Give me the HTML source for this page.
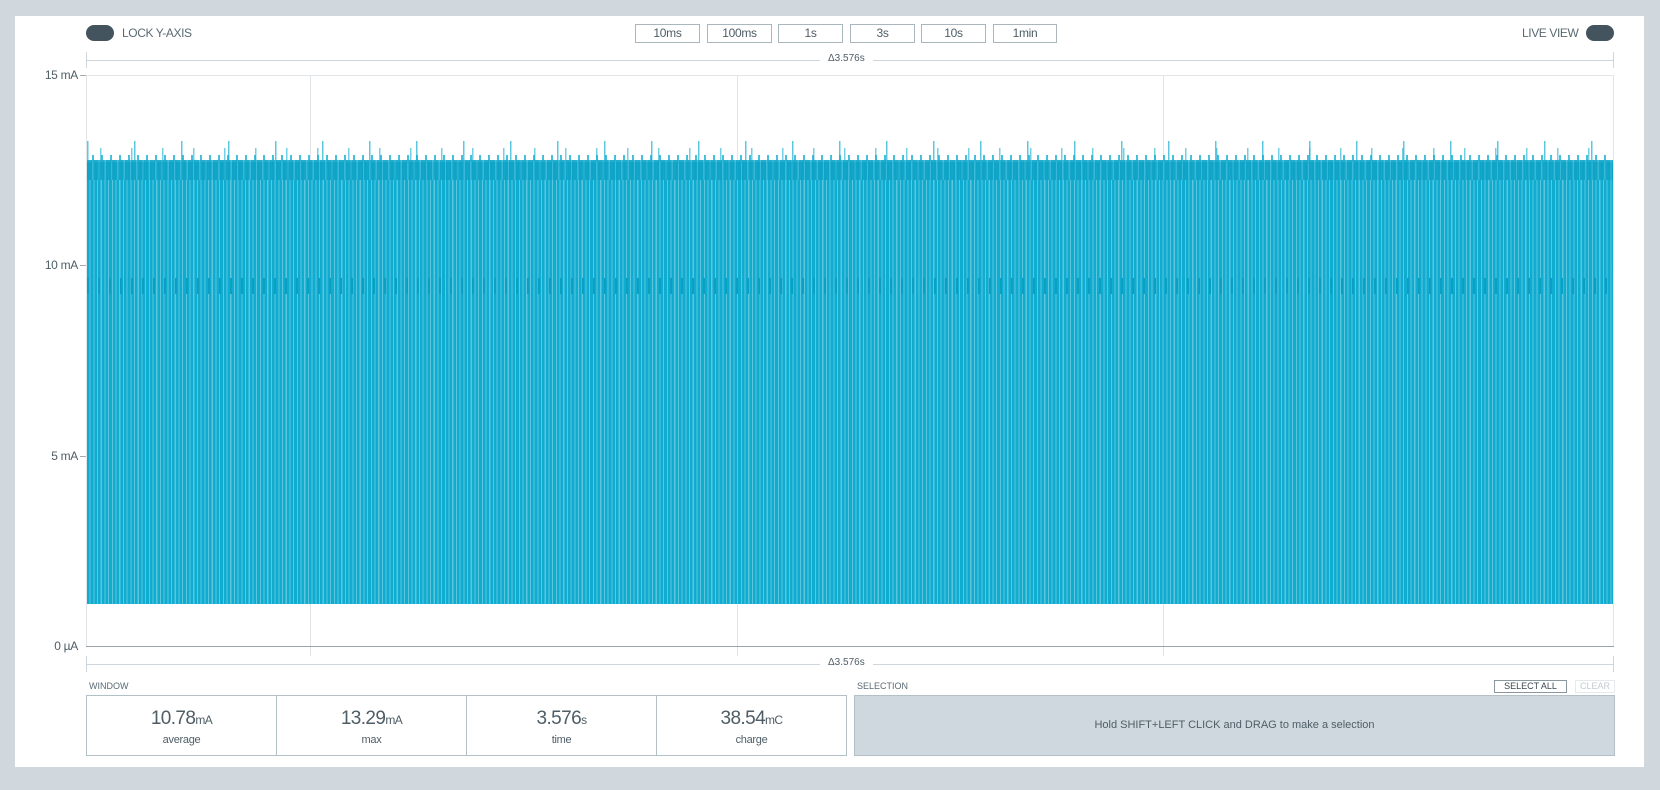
<!DOCTYPE html>
<html><head><meta charset="utf-8"><style>
*{margin:0;padding:0;box-sizing:border-box}
body{width:1660px;height:790px;background:#d0d8de;font-family:"Liberation Sans",sans-serif;color:#4e5d66;position:relative;overflow:hidden}
.card{position:absolute;left:15px;top:16px;width:1629px;height:751px;background:#fff}
.a{position:absolute}
.tog{position:absolute;width:28px;height:16px;border-radius:8px;background:#44545e}
.lbl{font-size:12px;color:#5a6a73;letter-spacing:-0.4px}
.btn{position:absolute;top:24px;height:19px;border:1px solid #a9b6bd;font-size:12px;text-align:center;line-height:17px;color:#4e5d66;letter-spacing:-0.3px}
.yl{position:absolute;font-size:12px;color:#4e5d66;text-align:right;width:60px;letter-spacing:-0.3px}
.box{position:absolute;top:695px;height:61px;border:1px solid #b3c0c7}
.val{position:absolute;top:12px;left:0;right:0;text-align:center;font-size:19px;color:#4e5d66;letter-spacing:-0.6px}
.val small{font-size:12px}
.cap{position:absolute;top:38px;left:0;right:0;text-align:center;font-size:11px;color:#4e5d66;letter-spacing:-0.3px}
</style></head><body>
<div class="card"></div>
<div class="tog" style="left:86px;top:25px"></div>
<div class="a lbl" style="left:122px;top:26px">LOCK Y-AXIS</div>
<div class="a lbl" style="left:1522px;top:26px">LIVE VIEW</div>
<div class="tog" style="left:1586px;top:25px"></div>
<div class="btn" style="left:635px;width:65px">10ms</div>
<div class="btn" style="left:707px;width:65px">100ms</div>
<div class="btn" style="left:778px;width:65px">1s</div>
<div class="btn" style="left:850px;width:65px">3s</div>
<div class="btn" style="left:921px;width:65px">10s</div>
<div class="btn" style="left:993px;width:64px">1min</div>
<div class="a" style="left:86px;top:60px;width:1528px;height:1px;background:#cdd6dc"></div>
<div class="a" style="left:86px;top:52px;width:1px;height:16px;background:#cdd6dc"></div>
<div class="a" style="left:1613px;top:52px;width:1px;height:16px;background:#cdd6dc"></div>
<div class="a" style="left:820px;top:53px;font-size:10px;background:#fff;padding:0 8px;color:#4e5d66">Δ3.576s</div>
<div class="a" style="left:86px;top:75px;width:1528px;height:571px;border:1px solid #e2e5e7;border-bottom:none"></div>
<div class="a" style="left:310px;top:75px;width:1px;height:581px;background:#e2e5e7"></div>
<div class="a" style="left:737px;top:75px;width:1px;height:581px;background:#e2e5e7"></div>
<div class="a" style="left:1163px;top:75px;width:1px;height:581px;background:#e2e5e7"></div>
<div class="a" style="left:86px;top:265px;width:1528px;height:1px;background:#eceef0"></div>
<div class="a" style="left:86px;top:456px;width:1528px;height:1px;background:#eceef0"></div>
<div class="a" style="left:80px;top:75px;width:6px;height:1px;background:#aaa"></div>
<div class="a" style="left:80px;top:265px;width:6px;height:1px;background:#aaa"></div>
<div class="a" style="left:80px;top:456px;width:6px;height:1px;background:#aaa"></div>
<div class="yl" style="top:68px;left:18px">15 mA</div>
<div class="yl" style="top:258px;left:18px">10 mA</div>
<div class="yl" style="top:449px;left:18px">5 mA</div>
<div class="yl" style="top:639px;left:18px">0 µA</div>
<div class="a" style="left:87px;top:162px;width:1526px;height:442px;background:repeating-linear-gradient(90deg,#10acd0 0,#10acd0 2.6px,#5cc6df 2.6px,#5cc6df 3.7px)"></div>
<div class="a" style="left:87px;top:160px;width:1526px;height:20px;background:repeating-linear-gradient(90deg,#0ea3c6 0,#0ea3c6 5px,#3bb9d8 5px,#3bb9d8 6.3px);opacity:.9"></div>
<div class="a" style="left:87px;top:278px;width:1526px;height:16px;background:repeating-linear-gradient(90deg,#0b9fc3 0,#0b9fc3 2px,transparent 2px,transparent 11px)"></div>
<div class="a" style="left:87px;top:141px;width:1526px;height:21px;background:repeating-linear-gradient(90deg,#16b0d3 0,#16b0d3 1.5px,transparent 1.5px,transparent 47px);opacity:.7"></div>
<div class="a" style="left:100px;top:148px;width:1513px;height:14px;background:repeating-linear-gradient(90deg,#16b0d3 0,#16b0d3 1.5px,transparent 1.5px,transparent 31px);opacity:.6"></div>
<div class="a" style="left:92px;top:155px;width:1521px;height:7px;background:repeating-linear-gradient(90deg,#16b0d3 0,#16b0d3 2px,transparent 2px,transparent 9px);opacity:.8"></div>
<div class="a" style="left:86px;top:646px;width:1528px;height:1px;background:#9aa3a8"></div>
<div class="a" style="left:86px;top:664px;width:1528px;height:1px;background:#cdd6dc"></div>
<div class="a" style="left:86px;top:656px;width:1px;height:16px;background:#cdd6dc"></div>
<div class="a" style="left:1613px;top:656px;width:1px;height:16px;background:#cdd6dc"></div>
<div class="a" style="left:820px;top:657px;font-size:10px;background:#fff;padding:0 8px;color:#4e5d66">Δ3.576s</div>
<div class="a" style="left:89px;top:681px;font-size:9px;color:#5a6a73">WINDOW</div>
<div class="a" style="left:857px;top:681px;font-size:9px;color:#5a6a73">SELECTION</div>
<div class="box" style="left:86px;width:191px"><div class="val">10.78<small>mA</small></div><div class="cap">average</div></div>
<div class="box" style="left:276px;width:191px"><div class="val">13.29<small>mA</small></div><div class="cap">max</div></div>
<div class="box" style="left:466px;width:191px"><div class="val">3.576<small>s</small></div><div class="cap">time</div></div>
<div class="box" style="left:656px;width:191px"><div class="val">38.54<small>mC</small></div><div class="cap">charge</div></div>
<div class="a" style="left:854px;top:695px;width:761px;height:61px;background:#cfd8de;border:1px solid #b3c0c7;font-size:11px;text-align:center;line-height:59px;color:#4e5d66">Hold SHIFT+LEFT CLICK and DRAG to make a selection</div>
<div class="a" style="left:1494px;top:680px;width:73px;height:13px;border:1px solid #8a979e;font-size:9px;text-align:center;line-height:11px;color:#3a4850">SELECT ALL</div>
<div class="a" style="left:1575px;top:680px;width:40px;height:13px;border:1px solid #e5eaed;font-size:9px;text-align:center;line-height:11px;color:#c3ccd1">CLEAR</div>
</body></html>
